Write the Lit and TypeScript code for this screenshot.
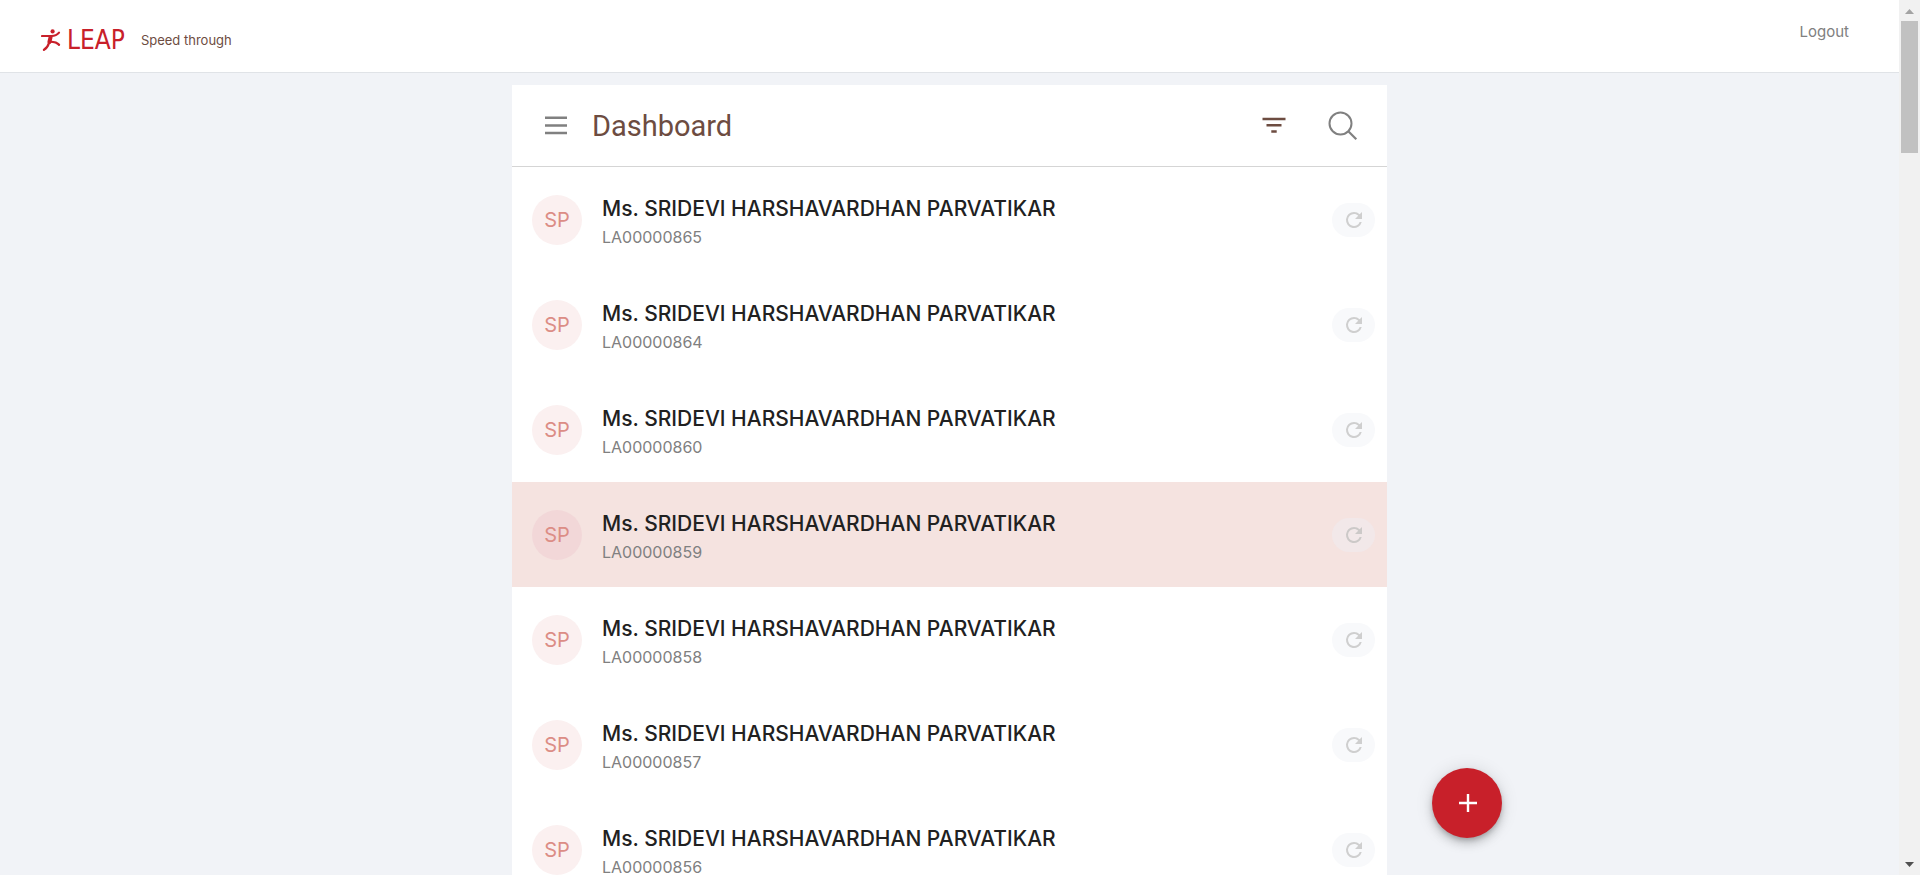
import { LitElement, html, css, svg } from "lit";
import { customElement, property } from "lit/decorators.js";
import { classMap } from "lit/directives/class-map.js";

interface Lead {
  name: string;
  id: string;
  active?: boolean;
}

const NAME = "Ms. SRIDEVI HARSHAVARDHAN PARVATIKAR";

const LEADS: Lead[] = [
  { name: NAME, id: "LA00000865" },
  { name: NAME, id: "LA00000864" },
  { name: NAME, id: "LA00000860" },
  { name: NAME, id: "LA00000859", active: true },
  { name: NAME, id: "LA00000858" },
  { name: NAME, id: "LA00000857" },
  { name: NAME, id: "LA00000856" },
];

const runner = svg`<svg width="20" height="22" viewBox="0 0 20 22" fill="none" stroke="#c8202a" stroke-linecap="round" stroke-linejoin="round" aria-hidden="true">
  <circle cx="11.6" cy="2.4" r="2.1" fill="#c8202a" stroke="none"/>
  <path d="M1 7H10.4C13.6 7 16.4 5.800 18 3.700" stroke-width="2.100"/>
  <path d="M9.600 8L8.400 13" stroke-width="4"/>
  <path d="M8 14C7 17.200 5.400 19.400 3 20.800" stroke-width="2.300"/>
  <path d="M9 12.600C12.500 12.800 16 13.200 18 15.800" stroke-width="2.300"/>
</svg>`;

@customElement("lead-row")
class LeadRow extends LitElement {
  @property({ attribute: false }) lead!: Lead;

  static styles = css`
    :host { display: block; }
    .row {
      display: flex;
      align-items: center;
      box-sizing: border-box;
      min-height: 105px;
      padding: 0 12px 0 20px;
      background: #fff;
    }
    .row.active { background: #f5e3e0; }
    .avatar {
      display: flex;
      flex: none;
      align-items: center;
      justify-content: center;
      width: 50px;
      height: 50px;
      border-radius: 50%;
      background: #fbf0f0;
      color: #dc8d86;
      font-size: 20px;
    }
    .active .avatar { background: #f2d7d8; }
    .text { flex: 1; min-width: 0; margin-left: 20px; padding-top: 6px; }
    .name {
      margin: 0;
      color: #212121;
      font-size: 21px;
      line-height: 28px;
      font-weight: 500;
    }
    .id {
      margin: 0;
      color: #808080;
      font-size: 16px;
      line-height: 28px;
    }
    .refresh {
      display: flex;
      flex: none;
      align-items: center;
      justify-content: center;
      width: 43px;
      height: 34px;
      padding: 0;
      border: 0;
      border-radius: 17px;
      background: #f8f9fb;
      color: #cfcfcf;
      cursor: pointer;
    }
    .active .refresh { background: #f2e8e9; color: #ccc9c8; }
  `;

  render() {
    return html`
      <div class=${classMap({ row: true, active: !!this.lead.active })}>
        <div class="avatar" aria-hidden="true">SP</div>
        <div class="text">
          <p class="name">${this.lead.name}</p>
          <p class="id">${this.lead.id}</p>
        </div>
        <button class="refresh" type="button" aria-label="Refresh">
          <svg width="24" height="24" viewBox="0 0 24 24" fill="currentColor" aria-hidden="true">
            <path d="M17.650 6.350A7.958 7.958 0 0 0 12 4a8 8 0 1 0 7.730 10h-2.080A6 6 0 1 1 12 6c1.660 0 3.140.690 4.220 1.780L13 11h7V4z"/>
          </svg>
        </button>
      </div>
    `;
  }
}

@customElement("app-root")
class AppRoot extends LitElement {
  static styles = css`
    :host {
      display: grid;
      grid-template-columns: minmax(0, 1fr) 21px;
      height: 100vh;
      overflow: hidden;
      background: #f1f3f7;
      font-family: Inter, "Liberation Sans", sans-serif;
    }
    button { font-family: inherit; }
    .page { position: relative; overflow: hidden; }
    .topbar {
      display: flex;
      align-items: center;
      box-sizing: border-box;
      height: 73px;
      padding: 8px 50px 0 41px;
      border-bottom: 1px solid #e0e3e7;
      background: #fff;
    }
    .brand {
      display: flex;
      align-items: center;
      gap: 6px;
      color: #c8202a;
      font-family: "DejaVu Sans Condensed", Roboto, sans-serif;
      font-size: 26px;
      line-height: 32px;
      text-decoration: none;
    }
    .tagline { margin: 0 auto 0 16px; color: #6d4c41; font-size: 13px; line-height: 20px; }
    .logout {
      align-self: flex-start;
      margin-top: 12px;
      color: #808080;
      font-size: 15px;
      line-height: 24px;
      text-decoration: none;
    }
    .panel { width: 46.08%; min-width: 320px; margin: 12px auto 0; background: #fff; }
    .panel-head {
      display: flex;
      align-items: center;
      box-sizing: border-box;
      height: 82px;
      padding: 0 29px 0 32px;
      border-bottom: 1px solid #d5d5d5;
    }
    .title {
      flex: 1;
      margin: 0 0 0 24px;
      color: #6d4c41;
      font-family: Roboto, "Liberation Sans", sans-serif;
      font-size: 29px;
      line-height: 40px;
      font-weight: 400;
    }
    .icon {
      display: flex;
      padding: 0;
      border: 0;
      background: none;
      color: #808080;
      cursor: pointer;
    }
    .icon.filter { margin-right: 42px; color: #6d4c41; }
    .list { margin: 0; padding: 0; list-style: none; }
    .fab {
      position: absolute;
      right: 397px;
      bottom: 37px;
      display: flex;
      align-items: center;
      justify-content: center;
      width: 70px;
      height: 70px;
      padding: 0 0 0 2px;
      border: 0;
      border-radius: 50%;
      background: #c8202a;
      color: #fff;
      box-shadow: 0 3px 5px -1px rgba(0, 0, 0, 0.2), 0 6px 10px rgba(0, 0, 0, 0.14), 0 1px 18px rgba(0, 0, 0, 0.12);
      cursor: pointer;
    }
    .scrollbar {
      display: flex;
      flex-direction: column;
      align-items: center;
      box-sizing: border-box;
      padding: 9px 0 8px;
      background: #f1f1f1;
    }
    .thumb { width: 17px; height: 132px; margin: 7px 0 auto; background: #c1c1c1; }
  `;

  render() {
    return html`
      <div class="page">
        <header class="topbar">
          <a class="brand" href="#">${runner}<span>LEAP</span></a>
          <p class="tagline">Speed through</p>
          <a class="logout" href="#">Logout</a>
        </header>
        <main class="panel">
          <div class="panel-head">
            <button class="icon" type="button" aria-label="Menu">
              <svg width="24" height="24" viewBox="0 0 24 24" stroke="currentColor" stroke-width="2.400" aria-hidden="true">
                <path d="M1 3.800H23M1 11.500H23M1 19H23"/>
              </svg>
            </button>
            <h1 class="title">Dashboard</h1>
            <button class="icon filter" type="button" aria-label="Filter">
              <svg width="24" height="24" viewBox="0 0 24 24" stroke="currentColor" stroke-width="2.600" aria-hidden="true">
                <path d="M.500 5H23.500M4.500 11.300H19.500M9.300 17.500H14.700"/>
              </svg>
            </button>
            <button class="icon" type="button" aria-label="Search">
              <svg width="30" height="30" viewBox="0 0 30 30" fill="none" stroke="currentColor" stroke-width="2" aria-hidden="true">
                <circle cx="12.500" cy="12.500" r="11"/>
                <path d="M20.300 20.300L28.300 28.300" stroke-width="2.200"/>
              </svg>
            </button>
          </div>
          <ul class="list">
            ${LEADS.map((lead) => html`<li><lead-row .lead=${lead}></lead-row></li>`)}
          </ul>
        </main>
        <button class="fab" type="button" aria-label="Add">
          <svg width="18" height="18" viewBox="0 0 18 18" stroke="currentColor" stroke-width="2.400" aria-hidden="true">
            <path d="M9 0V18M0 9H18"/>
          </svg>
        </button>
      </div>
      <div class="scrollbar" aria-hidden="true">
        <svg width="9" height="5" viewBox="0 0 9 5" fill="#a3a3a3"><path d="M4.500 0L9 5H0z"/></svg>
        <div class="thumb"></div>
        <svg width="9" height="5" viewBox="0 0 9 5" fill="#505050"><path d="M0 0H9L4.500 5z"/></svg>
      </div>
    `;
  }
}
